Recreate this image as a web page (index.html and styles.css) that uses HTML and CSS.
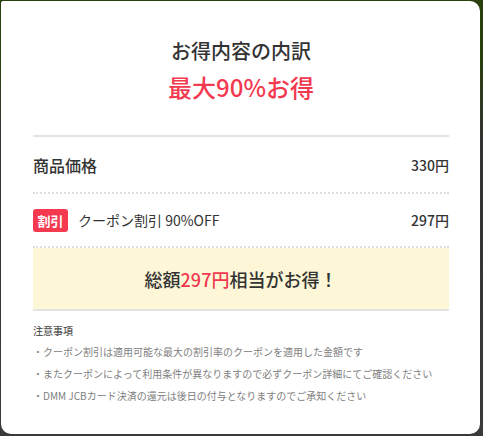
FILE: index.html
```html
<!DOCTYPE html>
<html lang="ja">
<head>
<meta charset="utf-8">
<link rel="stylesheet" href="styles.css">
</head>
<body>
<div class="modal">
  <header class="head">
    <h2 class="title">お得内容の内訳</h2>
    <p class="rate">最大90%お得</p>
  </header>
  <div class="row row-price">
    <span class="label">商品価格</span>
    <span class="price">330円</span>
  </div>
  <div class="row row-coupon">
    <span class="coupon"><span class="badge">割引</span><span class="coupon-name">クーポン割引 90%OFF</span></span>
    <span class="price">297円</span>
  </div>
  <div class="total">総額<span class="red">297円</span>相当がお得！</div>
  <section class="notes">
    <h3 class="notes-title">注意事項</h3>
    <ul class="notes-list">
      <li>・クーポン割引は適用可能な最大の割引率のクーポンを適用した金額です</li>
      <li>・またクーポンによって利用条件が異なりますので必ずクーポン詳細にてご確認ください</li>
      <li>・DMM JCBカード決済の還元は後日の付与となりますのでご承知ください</li>
    </ul>
  </section>
</div>
</body>
</html>
```
FILE: styles.css
```css
* { box-sizing: border-box; }
html, body { margin: 0; padding: 0; }
body {
  width: 483px;
  height: 436px;
  overflow: hidden;
  background: linear-gradient(#2a3f0e 0, #2a3f0e 60px, #333 140px, #3a3a3a 100%);
  padding: 1px 3px 2px 1px;
  font-family: "Noto Sans CJK JP", "Noto Sans", sans-serif;
  color: #333;
}
.modal {
  width: 479px;
  height: 433px;
  background: #fff;
  border-radius: 2px 10px 10px 10px;
  padding: 36px 31px 0 32px;
  display: flex;
  flex-direction: column;
}
.head {
  text-align: center;
  padding-bottom: 32px;
  border-bottom: 2px solid #e3e3e3;
}
.title {
  margin: 0;
  font-size: 20px;
  line-height: 28px;
  font-weight: 500;
  color: #333;
}
.rate {
  margin: 6px 0 0;
  font-size: 24px;
  line-height: 32px;
  font-weight: 500;
  color: #f2394f;
}
.row {
  display: flex;
  align-items: center;
  justify-content: space-between;
  border-bottom: 2px dotted #dedede;
}
.row-price { height: 57px; }
.row-coupon { height: 54px; }
.label {
  font-size: 16px;
  font-weight: 500;
}
.price {
  font-size: 14px;
  font-weight: 500;
}
.coupon {
  display: flex;
  align-items: center;
}
.badge {
  display: inline-flex;
  align-items: center;
  justify-content: center;
  width: 35px;
  height: 23px;
  border-radius: 3px;
  background: #f5394f;
  color: #fff;
  font-size: 13px;
  font-weight: 700;
}
.coupon-name {
  margin-left: 10px;
  font-size: 14px;
}
.total {
  height: 63px;
  padding-top: 18px;
  background: #fef7d7;
  border-bottom: 2px solid #e3e3e3;
  text-align: center;
  font-size: 18px;
  line-height: 26px;
  font-weight: 500;
}
.red { color: #f2394f; }
.notes { margin-top: 13px; }
.notes-title {
  margin: 0;
  font-size: 10px;
  line-height: 14px;
  font-weight: 500;
  color: #555;
}
.notes-list {
  list-style: none;
  margin: 3px 0 0;
  padding: 0;
}
.notes-list li {
  font-size: 10px;
  line-height: 22px;
  color: #808080;
}
```
